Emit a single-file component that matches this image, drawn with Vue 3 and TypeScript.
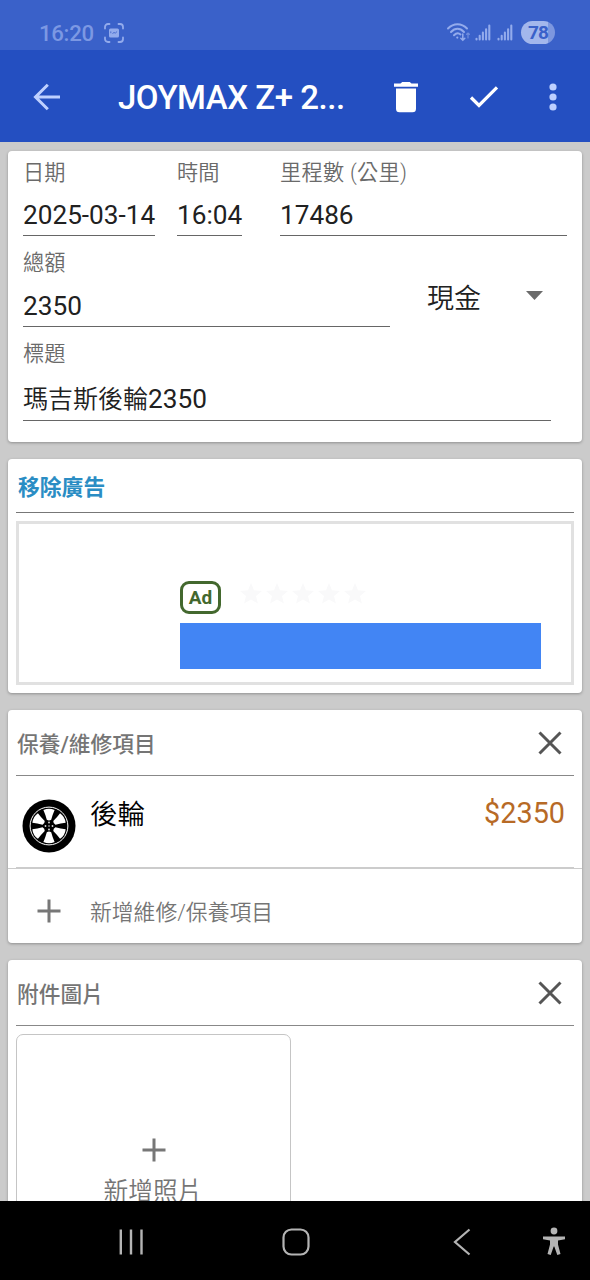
<script setup lang="ts">
interface Field {
  label: string
  value: string
  cls: string
}

const topFields: Field[] = [
  { label: '日期', value: '2025-03-14', cls: 'date' },
  { label: '時間', value: '16:04', cls: 'time' },
  { label: '里程數 (公里)', value: '17486', cls: 'odo' },
]
const windows: number[] = [0, 60, 120, 180, 240, 300]
const stars: number[] = [1, 2, 3, 4, 5]
</script>

<template>
  <div class="screen">
    <header class="status">
      <span class="clock">16:20</span>
      <svg class="shot" width="22" height="22" viewBox="0 0 22 22">
        <path d="M2 6.5V5a3 3 0 0 1 3-3h1.5M15.5 2H17a3 3 0 0 1 3 3v1.5M20 15.5V17a3 3 0 0 1-3 3h-1.5M6.5 20H5a3 3 0 0 1-3-3v-1.5" fill="none" stroke="#93abec" stroke-width="1.8" stroke-linecap="round" />
        <rect x="6" y="6.5" width="10" height="9" rx="1.5" fill="#93abec" />
        <path d="M7.8 11.200V9.400M9.500 11.500l1.500-1 1.300.6 1.800-1.600" fill="none" stroke="#4a6dcf" stroke-width="1" />
      </svg>
      <span class="spacer"></span>
      <svg class="wifi" width="25" height="21" viewBox="0 0 25 21" fill="none" stroke="#93abec" stroke-width="2" stroke-linecap="round">
        <path d="M2 6.5C7.5 .8 15.5 .8 21 6.5" />
        <path d="M5 10C9 5.800 14 5.800 18 10" />
        <path d="M8 13.200c2.200-2.300 4.800-2.300 6.500-.8" />
        <circle cx="11.300" cy="15.600" r="1.100" fill="#93abec" stroke="none" />
        <path d="M16.800 12v6M14.800 16.300l2 2 2-2" stroke-width="1.500" />
        <path d="M22 16v-5M20.600 12.300L22 11l1.400 1.300" stroke="#6f8ddd" stroke-width="1.200" />
      </svg>
      <svg v-for="n in 2" :key="n" class="signal" width="16" height="17" viewBox="0 0 16 17" stroke="#93abec" stroke-width="2.100" stroke-linecap="round">
        <path d="M1.500 14.800v.6M4.700 11.800v3.600M7.900 8.500v6.900M11.100 5.300v10.100M14.300 1.500v13.900" />
      </svg>
      <span class="battery">78</span>
    </header>

    <div class="appbar">
      <svg class="back" width="28" height="28" viewBox="0 0 28 28" fill="none" stroke="#bed0ff" stroke-width="3">
        <path d="M27 14H2.500M14.800 1.700L2.500 14l12.300 12.300" />
      </svg>
      <h1>JOYMAX Z+ 2...</h1>
      <svg class="trash" width="24" height="32" viewBox="0 0 24 32" fill="#fff">
        <path d="M0 2.600h6.500L8.200 1h7.600l1.700 1.600H24v3.200H0zM2 7.400h20v20.300a3.500 3.500 0 0 1-3.500 3.500h-13A3.500 3.500 0 0 1 2 27.700z" />
      </svg>
      <svg class="check" width="30" height="24" viewBox="0 0 30 24" fill="none" stroke="#fff" stroke-width="3.200">
        <path d="M2 12.500l8 8L28 2.300" />
      </svg>
      <svg class="dots" width="8" height="28" viewBox="0 0 8 28" fill="#bed0ff">
        <circle cx="4" cy="4" r="3.600" /><circle cx="4" cy="14" r="3.600" /><circle cx="4" cy="24" r="3.600" />
      </svg>
    </div>

    <main>
      <section class="card form">
        <div class="row">
          <div v-for="f in topFields" :key="f.label" class="field" :class="f.cls">
            <label>{{ f.label }}</label>
            <div class="value">{{ f.value }}</div>
          </div>
        </div>
        <div class="row second">
          <div class="field total">
            <label>總額</label>
            <div class="value">2350</div>
          </div>
          <div class="select">
            <span>現金</span>
            <svg width="17" height="9" viewBox="0 0 17 9"><path d="M0 0h17L8.500 9z" fill="#6b6b6b" /></svg>
          </div>
        </div>
        <div class="field title">
          <label>標題</label>
          <div class="value"><span class="han">瑪吉斯後輪</span>2350</div>
        </div>
      </section>

      <section class="card ad-card">
        <div class="remove">移除廣告</div>
        <div class="ad">
          <div class="ad-meta">
            <span class="badge">Ad</span>
            <span class="stars">
              <svg v-for="s in stars" :key="s" width="22" height="21" viewBox="0 0 22 21">
                <path d="M11 0l3 7.300 8 .6-6 5 1.900 7.700-6.900-4.200-6.900 4.200L6 12.900 0 7.900l8-.6z" fill="#f9f9fa" />
              </svg>
            </span>
          </div>
          <div class="cta"></div>
        </div>
      </section>

      <section class="card items">
        <div class="head">
          <span>保養/維修項目</span>
          <svg width="24" height="24" viewBox="0 0 24 24" stroke="#555" stroke-width="3"><path d="M1.500 1.500l21 21M22.500 1.500l-21 21" /></svg>
        </div>
        <div class="item">
          <svg class="wheel" width="54" height="54" viewBox="-27 -27 54 54">
            <circle r="26.500" fill="#000" />
            <circle r="18.900" fill="none" stroke="#fff" stroke-width="1" />
            <path v-for="a in windows" :key="a" :transform="`rotate(${a})`" d="M-5.600-16Q0-18.600 5.600-16Q3.600-11.500 2.200-6.200Q0-4.800-2.200-6.200Q-3.600-11.500-5.600-16z" fill="#fff" />
            <g fill="#ddd">
              <circle cx="-3.500" r=".9" /><circle cx="3.500" r=".9" />
              <circle cy="-3.500" r=".9" /><circle cy="3.500" r=".9" />
              <circle r=".8" />
            </g>
          </svg>
          <span class="name">後輪</span>
          <span class="price">$2350</span>
        </div>
        <div class="add">
          <svg width="24" height="24" viewBox="0 0 24 24" stroke="#777" stroke-width="3"><path d="M12 .5v23M.5 12h23" /></svg>
          <span>新增維修/保養項目</span>
        </div>
      </section>

      <section class="card photos">
        <div class="head">
          <span>附件圖片</span>
          <svg width="24" height="24" viewBox="0 0 24 24" stroke="#555" stroke-width="3"><path d="M1.500 1.500l21 21M22.500 1.500l-21 21" /></svg>
        </div>
        <div class="photo">
          <svg width="24" height="24" viewBox="0 0 24 24" stroke="#777" stroke-width="3"><path d="M12 .5v23M.5 12h23" /></svg>
          <span>新增照片</span>
        </div>
      </section>
    </main>

    <nav>
      <svg class="recents" width="26" height="26" viewBox="0 0 26 26" stroke="#b4b4b4" stroke-width="2.400"><path d="M2.800.5v25M13 .5v25M23.500.5v25" /></svg>
      <svg class="home" width="28" height="28" viewBox="0 0 28 28" fill="none" stroke="#b4b4b4" stroke-width="2.200"><rect x="1.500" y="1.500" width="25" height="25" rx="8" /></svg>
      <svg class="prev" width="18" height="28" viewBox="0 0 18 28" fill="none" stroke="#b4b4b4" stroke-width="2.200"><path d="M16.500 1.500L2 14l14.500 12.500" /></svg>
      <svg class="access" width="24" height="29" viewBox="0 0 24 29" fill="#b4b4b4">
        <circle cx="12" cy="4" r="3.400" />
        <path d="M1 9.500h22v2.800L16 13.500v4l2.500 9.500-3.200 1-3-8.500h-.6l-3 8.500-3.200-1L8 17.500v-4L1 12.300z" />
      </svg>
    </nav>
  </div>
</template>

<style>
body { margin: 0; }
</style>

<style scoped>
.screen {
  width: 590px;
  height: 1280px;
  display: flex;
  flex-direction: column;
  overflow: hidden;
  background: #cbcbcb;
  font-family: Roboto, "Noto Sans CJK TC", sans-serif;
  color: #212121;
}
.screen * { box-sizing: border-box; }
svg { display: block; flex: none; }
.status {
  flex: none;
  height: 50px;
  display: flex;
  align-items: center;
  padding: 15px 35px 0 39px;
  background: #3a61c9;
  color: #7c98e3;
}
.clock { font: 500 22.2px/32px Roboto, sans-serif; width: 64px; letter-spacing: -0.3px; }
.spacer { flex: 1; }
.wifi { margin-right: 4px; }
.signal { margin-right: 6px; }
.battery {
  width: 34px;
  height: 23px;
  margin-left: 2px;
  border-radius: 12px;
  background: linear-gradient(90deg, #a3b7ec 78%, #7d97df 78%);
  color: #3a61c9;
  text-align: center;
  font: 700 19px/23px Roboto, sans-serif;
  letter-spacing: -0.8px;
}
.appbar {
  flex: none;
  height: 92px;
  display: flex;
  align-items: center;
  padding: 2px 33px 0;
  background: #244fc1;
}
.appbar h1 {
  margin: 1px 0 0 57px;
  width: 276px;
  font: 500 33px/40px Roboto, sans-serif;
  letter-spacing: -0.48px;
  color: #fff;
  white-space: nowrap;
}
.trash { margin-left: 1px; }
.check { margin-left: 51px; }
.dots { margin-left: 50px; }
main {
  flex: 1;
  min-height: 0;
  overflow: hidden;
  padding: 9px 8px 0;
  display: flex;
  flex-direction: column;
}
.card {
  flex: none;
  background: #fff;
  border-radius: 4px;
  box-shadow: 0 1px 3px rgba(0, 0, 0, 0.3);
}
.form { height: 291px; padding-left: 15px; margin-bottom: 17px; }
.row { display: flex; }
.date { width: 132px; margin-right: 22px; }
.time { width: 65px; margin-right: 38px; }
.odo { width: 287px; }
.odo label { letter-spacing: 0.3px; }
.total { width: 367px; }
.title { width: 528px; }
label {
  display: block;
  height: 42px;
  line-height: 44px;
  font-size: 21.2px;
  font-weight: 350;
  color: #6a6a6a;
  white-space: nowrap;
}
.value {
  height: 43px;
  line-height: 44px;
  font-size: 26.2px;
  border-bottom: 1.5px solid #666;
  white-space: nowrap;
}
.second label { height: 50px; line-height: 54px; }
.second .value { height: 41px; line-height: 41px; }
.title label { height: 51px; line-height: 54px; }
.title .value { height: 43px; line-height: 43px; }
.han { font-size: 25px; font-weight: 350; }
.select {
  flex: 1;
  display: flex;
  align-items: center;
  padding: 28px 0 0 37px;
  font-size: 27px;
  font-weight: 350;
}
.select span { width: 99px; padding-top: 2px; }
.ad-card { height: 234px; padding: 0 8px; margin-bottom: 17px; }
.remove {
  height: 54px;
  padding-left: 2px;
  line-height: 58px;
  font-size: 21.8px;
  font-weight: 700;
  color: #2a8dc4;
  border-bottom: 1px solid #777;
}
.ad {
  height: 164px;
  margin-top: 8px;
  padding: 57px 30px 0 161px;
  border: 3.5px solid #e1e1e1;
}
.ad-meta { display: flex; height: 45px; }
.badge {
  width: 41px;
  height: 33px;
  border: 3px solid #43682e;
  border-radius: 9px;
  color: #43682e;
  font: 700 19px/28px Roboto, sans-serif;
  text-align: center;
}
.stars { display: flex; gap: 4px; margin: 2px 0 0 19px; }
.cta { height: 46px; margin-top: -3px; background: #4285f4; }
.items { height: 233px; margin-bottom: 17px; }
.head {
  height: 66px;
  margin: 0 8px;
  padding: 0 12px 0 1px;
  display: flex;
  align-items: center;
  justify-content: space-between;
  border-bottom: 1.5px solid #888;
  font-size: 21.7px;
  font-weight: 500;
  color: #757575;
}
.item {
  height: 92px;
  margin: 0 8px;
  padding: 0 9px 0 6px;
  display: flex;
  align-items: flex-start;
  border-bottom: 1px solid #ccc;
  color: #000;
}
.wheel { margin-top: 23px; }
.name { margin: 19px 0 0 14px; font-size: 27.5px; line-height: 40px; font-weight: 350; }
.price { margin: 17px 0 0 auto; font-size: 28.8px; line-height: 40px; color: #b76a26; }
.add {
  height: 75px;
  padding: 9px 0 0 29px;
  display: flex;
  align-items: center;
  border-top: 1px solid #ccc;
  font-size: 21.8px;
  font-weight: 350;
  color: #757575;
}
.add span { margin-left: 29px; }
.photos { height: 400px; }
.photo {
  width: 275px;
  height: 275px;
  margin: 8px 0 0 8px;
  padding-top: 103px;
  display: flex;
  flex-direction: column;
  align-items: center;
  border: 1.5px solid #c5c5c5;
  border-radius: 7px;
  font-size: 24.7px;
  font-weight: 350;
  color: #757575;
}
.photo span { line-height: 36px; margin: 12px 1px 0 0; }
nav {
  flex: none;
  height: 79px;
  padding: 2px 25px 0 118px;
  display: flex;
  align-items: center;
  background: #000;
}
.home { margin-left: 138px; }
.prev { margin-left: 143px; }
.access { margin-left: 71px; }
</style>
